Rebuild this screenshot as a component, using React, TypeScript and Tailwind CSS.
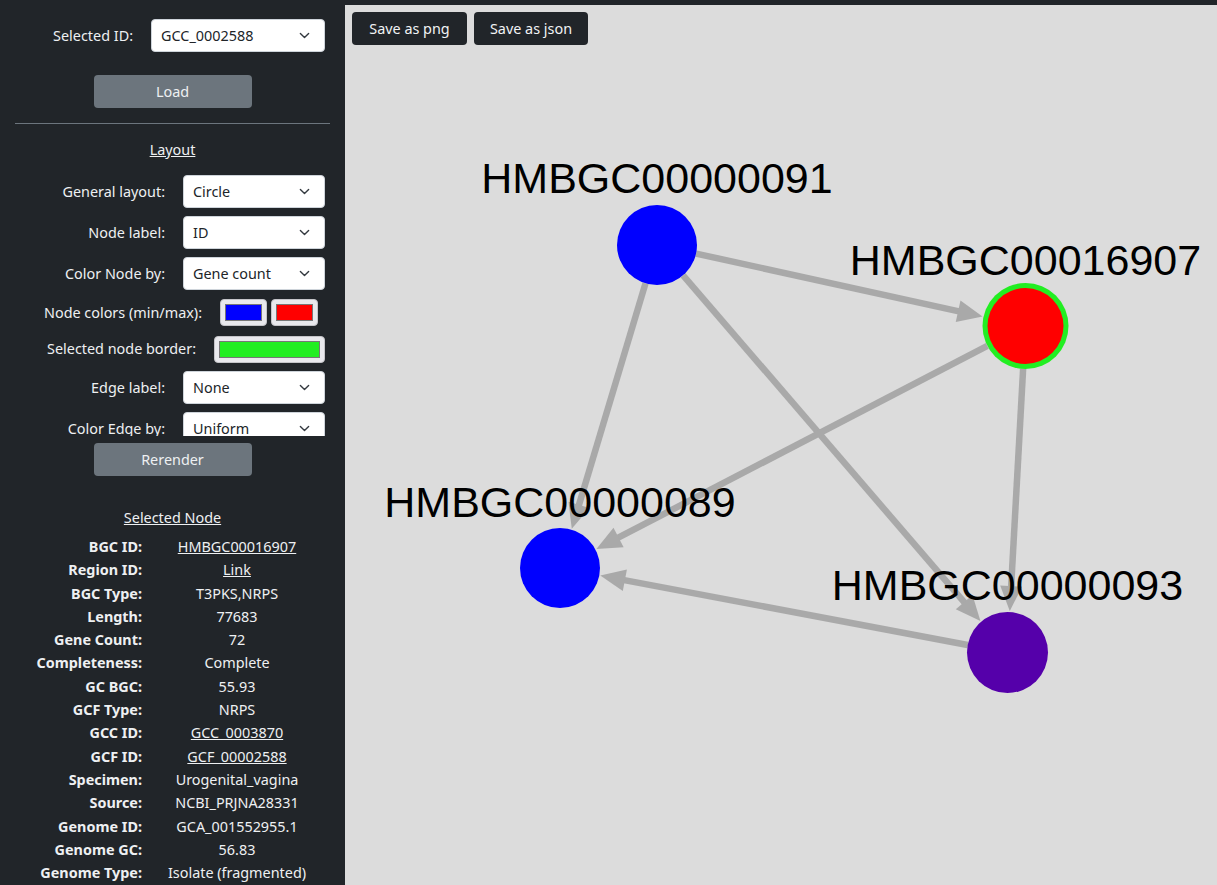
import React from "react";

type Node = { id: string; x: number; y: number; r: number; fill: string; border?: string; base: number };

// canvas coords (page x - 345, page y - 5)
const nodes: Node[] = [
  { id: "HMBGC00000091", x: 312, y: 240, r: 40, fill: "#0000ff", base: 188 },
  { id: "HMBGC00016907", x: 680.5, y: 321, r: 43, fill: "#ff0000", border: "#22ee22", base: 270 },
  { id: "HMBGC00000089", x: 215, y: 563, r: 40, fill: "#0000ff", base: 512 },
  { id: "HMBGC00000093", x: 662.5, y: 647.5, r: 40.5, fill: "#5500aa", base: 595 },
];

const edges: [number, number][] = [
  [0, 1],
  [0, 2],
  [0, 3],
  [1, 2],
  [1, 3],
  [3, 2],
];

function Edge({ s, t }: { s: Node; t: Node }) {
  const dx = t.x - s.x;
  const dy = t.y - s.y;
  const len = Math.hypot(dx, dy);
  const ux = dx / len;
  const uy = dy / len;
  const tipX = t.x - ux * (t.r + 1);
  const tipY = t.y - uy * (t.r + 1);
  const al = 25;
  const aw = 11;
  const bx = tipX - ux * al;
  const by = tipY - uy * al;
  const sx = s.x + ux * s.r;
  const sy = s.y + uy * s.r;
  const pts = `${tipX},${tipY} ${bx - uy * aw},${by + ux * aw} ${bx + uy * aw},${by - ux * aw}`;
  return (
    <g>
      <line x1={sx} y1={sy} x2={bx + ux * 2} y2={by + uy * 2} stroke="#a9a9a9" strokeWidth={6.5} />
      <polygon points={pts} fill="#a9a9a9" />
    </g>
  );
}

function Chevron() {
  return (
    <svg width="11" height="11" viewBox="0 0 16 16" className="shrink-0">
      <path d="M2 5l6 6 6-6" fill="none" stroke="#343a40" strokeWidth="2" strokeLinecap="round" strokeLinejoin="round" />
    </svg>
  );
}

function Select({ value, w }: { value: string; w: string }) {
  return (
    <div className={`${w} h-[33px] shrink-0 bg-white rounded-[4px] border border-[#ced4da] flex items-center justify-between pl-[9px] pr-[14px] text-[#212529]`}>
      <span>{value}</span>
      <Chevron />
    </div>
  );
}

function Swatch({ color, w }: { color: string; w: string }) {
  return (
    <div className={`${w} h-[27px] rounded-[4px] bg-[#e9e9ed] border border-[#c4c4c8] p-[4px] shrink-0`}>
      <div className="w-full h-full border border-[#777]" style={{ background: color }} />
    </div>
  );
}

const info: [string, string, boolean?][] = [
  ["BGC ID:", "HMBGC00016907", true],
  ["Region ID:", "Link", true],
  ["BGC Type:", "T3PKS,NRPS"],
  ["Length:", "77683"],
  ["Gene Count:", "72"],
  ["Completeness:", "Complete"],
  ["GC BGC:", "55.93"],
  ["GCF Type:", "NRPS"],
  ["GCC ID:", "GCC_0003870", true],
  ["GCF ID:", "GCF_00002588", true],
  ["Specimen:", "Urogenital_vagina"],
  ["Source:", "NCBI_PRJNA28331"],
  ["Genome ID:", "GCA_001552955.1"],
  ["Genome GC:", "56.83"],
  ["Genome Type:", "Isolate (fragmented)"],
];

export default function App() {
  return (
    <div className="flex w-[1217px] h-[885px] overflow-hidden font-['Noto_Sans',sans-serif] text-[14.4px]">
      <aside className="w-[345px] shrink-0 bg-[#212529] text-[#eef0f2] flex flex-col">
        <div className="flex items-center justify-end gap-[18px] pr-[20px] mt-[19px]">
          <span>Selected ID:</span>
          <Select value="GCC_0002588" w="w-[174px]" />
        </div>
        <button className="mx-auto mt-[23px] w-[158px] h-[33px] rounded-[4px] bg-[#6c757d] text-[#eef0f2]">Load</button>
        <div className="mx-[15px] mt-[15px] h-px bg-[#6c757d]" />
        <div className="h-[312px] overflow-hidden flex flex-col">
          <div className="text-center underline mt-[16px] leading-[20px]">Layout</div>
          <div className="flex flex-col gap-2 mt-[15px]">
            <div className="flex items-center justify-end gap-[18px] pr-[20px]">
              <span>General layout:</span>
              <Select value="Circle" w="w-[142px]" />
            </div>
            <div className="flex items-center justify-end gap-[18px] pr-[20px]">
              <span>Node label:</span>
              <Select value="ID" w="w-[142px]" />
            </div>
            <div className="flex items-center justify-end gap-[18px] pr-[20px]">
              <span>Color Node by:</span>
              <Select value="Gene count" w="w-[142px]" />
            </div>
            <div className="flex items-center justify-end gap-[18px] pr-[27px] h-[29px]">
              <span>Node colors (min/max):</span>
              <div className="flex gap-[4px]">
                <Swatch color="#0000ff" w="w-[47px]" />
                <Swatch color="#ff0000" w="w-[47px]" />
              </div>
            </div>
            <div className="flex items-center justify-end gap-[18px] pr-[20px] h-[28px]">
              <span>Selected node border:</span>
              <Swatch color="#22ee22" w="w-[111px]" />
            </div>
            <div className="flex items-center justify-end gap-[18px] pr-[20px]">
              <span>Edge label:</span>
              <Select value="None" w="w-[142px]" />
            </div>
            <div className="flex items-center justify-end gap-[18px] pr-[20px]">
              <span>Color Edge by:</span>
              <Select value="Uniform" w="w-[142px]" />
            </div>
          </div>
        </div>
        <button className="mx-auto mt-[7px] w-[158px] h-[33px] rounded-[4px] bg-[#6c757d] text-[#eef0f2]">Rerender</button>
        <div className="text-center underline mt-[32px] leading-[20px]">Selected Node</div>
        <div className="grid grid-cols-[142px_170px] gap-x-[10px] mt-[7px] leading-[23.3px]">
          {info.map(([k, v, link]) => (
            <React.Fragment key={k}>
              <div className="text-right font-bold">{k}</div>
              <div className={`text-center ${link ? "underline" : ""}`}>{v}</div>
            </React.Fragment>
          ))}
        </div>
      </aside>
      <main className="flex-1 flex flex-col">
        <div className="h-[5px] bg-[#212529]" />
        <div className="relative flex-1 bg-[#dcdcdc]">
          <svg className="absolute inset-0" width="872" height="880">
            {edges.map(([a, b]) => (
              <Edge key={`${a}-${b}`} s={nodes[a]} t={nodes[b]} />
            ))}
            {nodes.map((n) =>
              n.border ? (
                <g key={n.id}>
                  <circle cx={n.x} cy={n.y} r={n.r} fill={n.border} />
                  <circle cx={n.x} cy={n.y} r={n.r - 5} fill={n.fill} />
                </g>
              ) : (
                <circle key={n.id} cx={n.x} cy={n.y} r={n.r} fill={n.fill} />
              )
            )}
            {nodes.map((n) => (
              <text
                key={n.id + "l"}
                x={n.x}
                y={n.base}
                textAnchor="middle"
                fontFamily="'Liberation Sans', Arial, sans-serif"
                fontSize="43"
                fill="#000"
              >
                {n.id}
              </text>
            ))}
          </svg>
          <div className="relative flex gap-[7px] p-[7px]">
            <button className="h-[33px] w-[115px] rounded-[4px] bg-[#212529] text-[#f1f3f5]">Save as png</button>
            <button className="h-[33px] w-[114px] rounded-[4px] bg-[#212529] text-[#f1f3f5]">Save as json</button>
          </div>
        </div>
      </main>
    </div>
  );
}
